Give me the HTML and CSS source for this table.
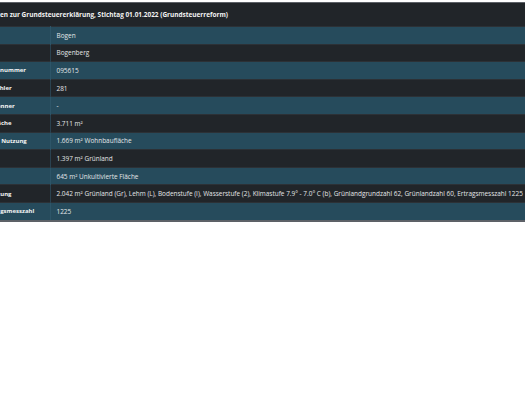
FILE: index.html
```html
<!DOCTYPE html>
<html lang="de">
<head>
<meta charset="utf-8">
<title>Grundsteuer</title>
<link rel="stylesheet" href="styles.css">
</head>
<body>
<div class="viewport">
<table class="info">
  <colgroup><col class="label-col"><col></colgroup>
  <thead>
    <tr><th colspan="2" class="caption">Informationen zur Grundsteuererklärung, Stichtag 01.01.2022 (Grundsteuerreform)</th></tr>
  </thead>
  <tbody>
    <tr class="odd"><th>Gemeinde</th><td>Bogen</td></tr>
    <tr><th>Gemarkung</th><td>Bogenberg</td></tr>
    <tr class="odd"><th>Gemarkungsnummer</th><td>095615</td></tr>
    <tr><th>Flurstückszähler</th><td>281</td></tr>
    <tr class="odd"><th>Flurstücksnenner</th><td>-</td></tr>
    <tr><th>Flurstücksfläche</th><td>3.711 m²</td></tr>
    <tr class="odd"><th>Tatsächliche Nutzung</th><td>1.669 m² Wohnbaufläche</td></tr>
    <tr><th></th><td>1.397 m² Grünland</td></tr>
    <tr class="odd"><th></th><td>645 m² Unkultivierte Fläche</td></tr>
    <tr><th>Bodenschätzung</th><td>2.042 m² Grünland (Gr), Lehm (L), Bodenstufe (I), Wasserstufe (2), Klimastufe 7.9° - 7.0° C (b), Grünlandgrundzahl 62, Grünlandzahl 60, Ertragsmesszahl 1225</td></tr>
    <tr class="odd"><th>Gesamtertragsmesszahl</th><td>1225</td></tr>
  </tbody>
</table>
</div>
</body>
</html>
```

FILE: styles.css
```css
html, body {
  margin: 0;
  padding: 0;
  background: #ffffff;
}
.viewport {
  overflow: hidden;
  padding-top: 2px;
}
.info {
  border-collapse: collapse;
  table-layout: fixed;
  margin-left: -43px;
  width: calc(100% + 43px);
  font-family: "Open Sans", "Liberation Sans", sans-serif;
  color: #e4e6e8;
  background: #212529;
  border-top: 1px solid #5d6167;
  border-bottom: 2px solid #5d6167;
}
.label-col {
  width: 93px;
}
.info th, .info td {
  text-align: left;
  vertical-align: middle;
  white-space: nowrap;
  border-top: 1px solid #2c3136;
}
.info .caption {
  height: 22px;
  padding: 0 0 1px 4px;
  font-size: 6.45px;
  font-weight: 700;
  color: #f2f2f2;
  border-top: none;
}
.info tbody th {
  height: 16.6px;
  padding: 0 0 0 5px;
  overflow: hidden;
  font-size: 6px;
  font-weight: 700;
  color: #f4f4f4;
  border-right: 1px solid #2a4250;
}
.info tbody td {
  height: 16.6px;
  padding: 0 6px;
  font-size: 6.45px;
  font-weight: 400;
}
.info tbody tr.odd {
  background: #264b5c;
}
.info tbody tr.odd th {
  border-right-color: #2d5568;
}
```
